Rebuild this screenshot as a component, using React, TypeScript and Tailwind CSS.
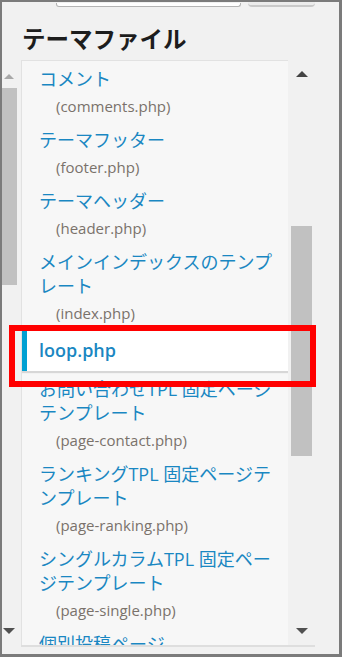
type ThemeFile = {
  title?: string;
  file?: string;
  active?: boolean;
};

const files: ThemeFile[] = [
  { title: "コメント", file: "comments.php" },
  { title: "テーマフッター", file: "footer.php" },
  { title: "テーマヘッダー", file: "header.php" },
  { title: "メインインデックスのテンプレート", file: "index.php" },
  { file: "loop.php", active: true },
  { title: "お問い合わせTPL 固定ページテンプレート", file: "page-contact.php" },
  { title: "ランキングTPL 固定ページテンプレート", file: "page-ranking.php" },
  { title: "シングルカラムTPL 固定ページテンプレート", file: "page-single.php" },
  // only the top of this one peeks out of the scroll box
  { title: "個別投稿ページ" },
];

// Small scrollbar arrow drawn with css borders.
function Arrow({ up, light }: { up?: boolean; light?: boolean }) {
  if (up) {
    return (
      <div
        className={
          light
            ? "h-0 w-0 border-x-[5px] border-b-[5px] border-x-transparent border-b-[#a8a8a8]"
            : "h-0 w-0 border-x-[6px] border-b-[6px] border-x-transparent border-b-[#444]"
        }
      />
    );
  }
  return <div className="h-0 w-0 border-x-[6px] border-t-[6px] border-x-transparent border-t-[#505050]" />;
}

function FileItem({ item }: { item: ThemeFile }) {
  if (item.active) {
    return (
      <li className="flex h-[42px] items-center border-l-[5px] border-[#00a0d2] bg-white pl-[12px] shadow-[0_2px_1px_rgba(0,0,0,0.13)]">
        <span className="text-[18px] leading-[24px] font-semibold text-[#1a87c2]">{item.file}</span>
      </li>
    );
  }
  return (
    <li className="pt-[6px] pr-[4px] pb-[7px] pl-[17px]">
      <p className="text-[18px] leading-[24px] text-[#1a87c2]">{item.title}</p>
      {item.file && (
        <p className="mt-[6px] pl-[17px] text-[15px] leading-[18px] text-[#7a726b]">({item.file})</p>
      )}
    </li>
  );
}

export default function App() {
  return (
    <div className="relative flex h-[657px] w-[342px] flex-col overflow-hidden border-t-2 border-r-[3px] border-b-[3px] border-l-2 border-[#7b7b7b] bg-[#f1f1f1] font-['Open_Sans','Noto_Sans_CJK_JP',sans-serif]">
      {/* search box and button, cut off at the top */}
      <div className="flex h-[5px] shrink-0 items-end">
        <div className="ml-[54px] h-[4px] w-[185px] rounded-b-[3px] border-x border-b border-[#b4b4b4] bg-white" />
        <div className="ml-[7px] h-[5px] w-[67px] rounded-b-[4px] border-b-2 border-[#c9c9c9] bg-[#ececec]" />
      </div>

      <h2 className="mt-[15px] h-[32px] shrink-0 pl-[20px] font-['Noto_Sans_CJK_JP',sans-serif] text-[23.5px] leading-[32px] font-bold text-[#1d1d1d]">
        テーマファイル
      </h2>

      <div className="mt-[6px] flex h-[585px] shrink-0">
        {/* left scrollbar */}
        <div className="flex w-[19px] flex-col items-start">
          <div className="mt-[14px] ml-[2px]">
            <Arrow up light />
          </div>
          <div className="mt-[9px] h-[197px] w-[15px] bg-[#c1c1c1]" />
          <div className="flex-1" />
          <div className="mb-[11px] ml-[1px]">
            <Arrow />
          </div>
        </div>

        {/* file list */}
        <div className="w-[267px] overflow-hidden border-t border-l border-[#e2e2e2] bg-[#f7f7f7]">
          <ul>
            {files.map((f) => (
              <FileItem key={f.title ?? f.file} item={f} />
            ))}
          </ul>
        </div>

        {/* right scrollbar */}
        <div className="flex w-[27px] flex-col items-center">
          <div className="mt-[11px]">
            <Arrow up />
          </div>
          <div className="mt-[149px] h-[230px] w-[21px] bg-[#c1c1c1]" />
          <div className="flex-1" />
          <div className="mb-[11px]">
            <Arrow />
          </div>
        </div>
      </div>
      <div className="ml-[19px] h-[2px] w-[294px] shrink-0 bg-[#dedede]" />

      {/* red highlight frame */}
      <div className="absolute top-[323px] left-[7px] h-[62px] w-[307px] border-[6px] border-[#ff0000]" />
    </div>
  );
}
